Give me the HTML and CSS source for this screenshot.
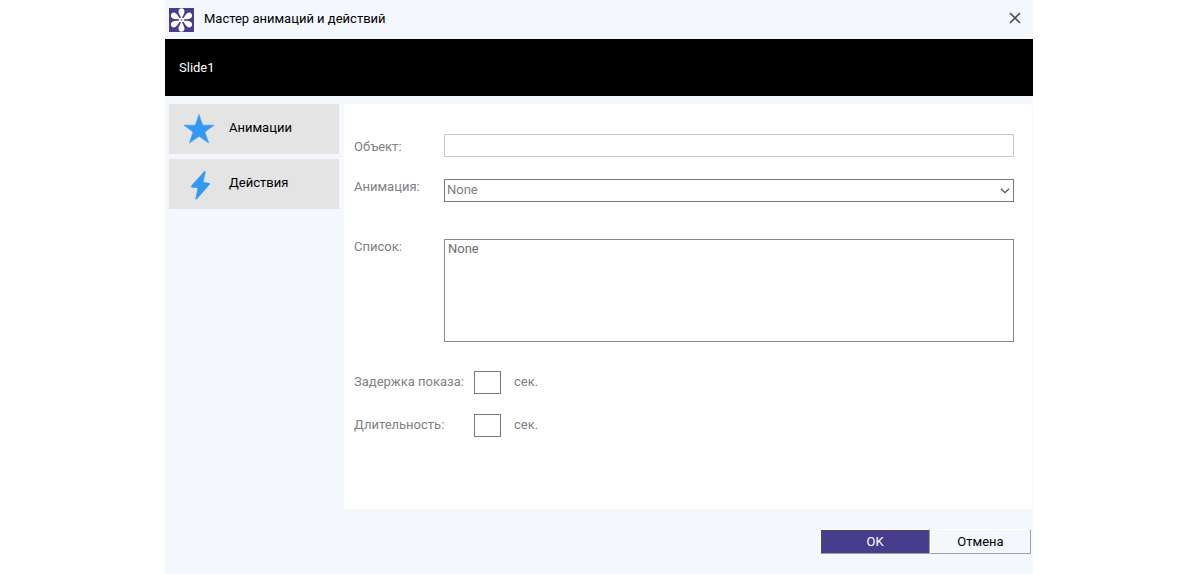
FILE: index.html
```html
<!DOCTYPE html>
<html lang="ru">
<head>
<meta charset="utf-8">
<title>Мастер анимаций и действий</title>
<link rel="stylesheet" href="styles.css">
</head>
<body>
<main class="dialog">
  <header class="titlebar">
    <svg class="logo" viewBox="0 0 25 24" aria-hidden="true">
      <rect width="25" height="24" fill="#483d8b"/>
      <g fill="#fff">
        <path id="petal" d="M12.5 10.8C11.8 8.4 9.4 5.9 9.5 3.2C9.6 1.2 11 .2 12.5 .2S15.4 1.2 15.5 3.2C15.6 5.9 13.2 8.4 12.5 10.8Z"/>
        <use href="#petal" transform="rotate(60 12.5 12)"/>
        <use href="#petal" transform="rotate(120 12.5 12)"/>
        <use href="#petal" transform="rotate(180 12.5 12)"/>
        <use href="#petal" transform="rotate(240 12.5 12)"/>
        <use href="#petal" transform="rotate(300 12.5 12)"/>
        <circle cx="12.5" cy="12" r="2.5"/>
      </g>
      <circle cx="12.5" cy="12" r="1" fill="#8e87b8"/>
    </svg>
    <h1 class="title">Мастер анимаций и действий</h1>
    <button class="close" type="button" aria-label="Закрыть">
      <svg viewBox="0 0 12 12" width="12" height="12"><path d="M1 1L11 11M11 1L1 11" stroke="#505255" stroke-width="1.7" fill="none"/></svg>
    </button>
  </header>
  <div class="slide-name">Slide1</div>
  <div class="content">
    <nav class="tabs">
      <button class="tab" type="button">
        <svg class="tab-icon" viewBox="0 0 32 32" aria-hidden="true"><path d="M16 1.5L19.7 12.2H31L21.9 18.9L25.6 30L16 23.3L6.4 30L10.1 18.9L1 12.2H12.3Z" fill="#3399f3" stroke="#3399f3" stroke-width=".6"/></svg>
        <span>Анимации</span>
      </button>
      <button class="tab" type="button">
        <svg class="tab-icon" viewBox="0 0 32 32" aria-hidden="true"><path d="M21.8 2.8L8.3 17.5V19.4L14.6 20L12.4 31.2L13.6 31.5L26.7 16.4V15L20.4 14L22.8 3.2Z" fill="#3399f3"/></svg>
        <span>Действия</span>
      </button>
    </nav>
    <form class="panel" id="wizard">
      <div class="row row-object">
        <label for="object">Объект:</label>
        <input class="field field-light" id="object" type="text">
      </div>
      <div class="row row-animation">
        <label for="animation">Анимация:</label>
        <select class="field combo" id="animation"><option>None</option></select>
      </div>
      <div class="row row-list">
        <label for="list">Список:</label>
        <select class="field list" id="list" size="5"><option>None</option></select>
      </div>
      <div class="row row-time">
        <label for="delay">Задержка показа:</label>
        <input class="field" id="delay" type="text">
        <span>сек.</span>
      </div>
      <div class="row row-time">
        <label for="duration">Длительность:</label>
        <input class="field" id="duration" type="text">
        <span>сек.</span>
      </div>
    </form>
  </div>
  <footer class="actions">
    <button class="btn btn-ok" type="submit" form="wizard">OK</button>
    <button class="btn btn-cancel" type="button">Отмена</button>
  </footer>
</main>
</body>
</html>
```
FILE: styles.css
```css
* {
  box-sizing: border-box;
}

body {
  margin: 0;
  padding: 0 167px 0 165px;
  background: #fff;
  color: #000;
  font: 13px/16px Roboto, "Noto Sans", sans-serif;
}

button,
input,
select {
  margin: 0;
  font: inherit;
  color: inherit;
  border-radius: 0;
}

.dialog {
  display: flex;
  flex-direction: column;
  min-height: 100vh;
  background: #f4f7fc;
}

.titlebar {
  display: flex;
  align-items: center;
  height: 39px;
  padding: 0 12px 0 4px;
}

.logo {
  width: 25px;
  height: 24px;
}

.title {
  flex: 1;
  margin: 0 0 2px 10px;
  font-size: 13px;
  font-weight: 400;
}

.close {
  display: flex;
  padding: 0;
  margin-bottom: 4px;
  border: 0;
  background: none;
}

.slide-name {
  padding: 21px 14px 20px;
  background: #000;
  color: #fff;
}

.content {
  display: flex;
  gap: 5px;
  padding: 8px 1px 0 4px;
}

.tabs {
  display: flex;
  flex-direction: column;
  gap: 5px;
  width: 170px;
}

.tab {
  display: flex;
  align-items: center;
  gap: 14px;
  height: 50px;
  padding: 0 14px;
  border: 0;
  background: #e4e4e4;
}

.tab span {
  margin-bottom: 2px;
}

.tab-icon {
  width: 32px;
  height: 32px;
}

.panel {
  flex: 1;
  padding: 30px 18px 52px 10px;
  background: #fff;
  color: #808080;
}

.row {
  display: grid;
  grid-template-columns: 90px 1fr;
}

.row label {
  align-self: start;
}

.row-object {
  margin-bottom: 22px;
}

.row-object label {
  padding-top: 5px;
}

.row-animation {
  margin-bottom: 37px;
}

.row-list {
  margin-bottom: 29px;
}

.row-time {
  grid-template-columns: 120px 27px auto;
  justify-content: start;
  margin-bottom: 20px;
}

.row-time label,
.row-time span {
  padding-top: 3px;
}

.row-time span {
  padding-left: 13px;
}

.field {
  width: 100%;
  height: 23px;
  padding: 0 2px;
  border: 1px solid #7a7a7a;
  background: #fff;
  outline: 0;
}

.field-light {
  border-color: #c8c8c8;
}

.combo {
  appearance: none;
  padding-bottom: 2px;
  background: #fff url("data:image/svg+xml,%3Csvg xmlns='http://www.w3.org/2000/svg' width='10' height='6'%3E%3Cpath d='M1 .7L5 4.7L9 .7' fill='none' stroke='%23555' stroke-width='1.3'/%3E%3C/svg%3E") no-repeat right 3px top 8px;
}

.list {
  height: 103px;
  padding: 1px 0;
  border-color: #828790;
  color: #6d6d6d;
  overflow: hidden;
}

.list option {
  min-height: 16px;
  padding: 0 3px;
}

.actions {
  display: flex;
  justify-content: flex-end;
  padding: 20px 2px;
}

.btn {
  height: 25px;
  padding: 0;
  border: 1px solid;
  border-color: #fff #a0a0a0 #a0a0a0 #fff;
}

.btn-ok {
  width: 110px;
  background: #483d8b;
  color: #fff;
}

.btn-cancel {
  width: 101px;
  background: #f4f7fc;
}
```
